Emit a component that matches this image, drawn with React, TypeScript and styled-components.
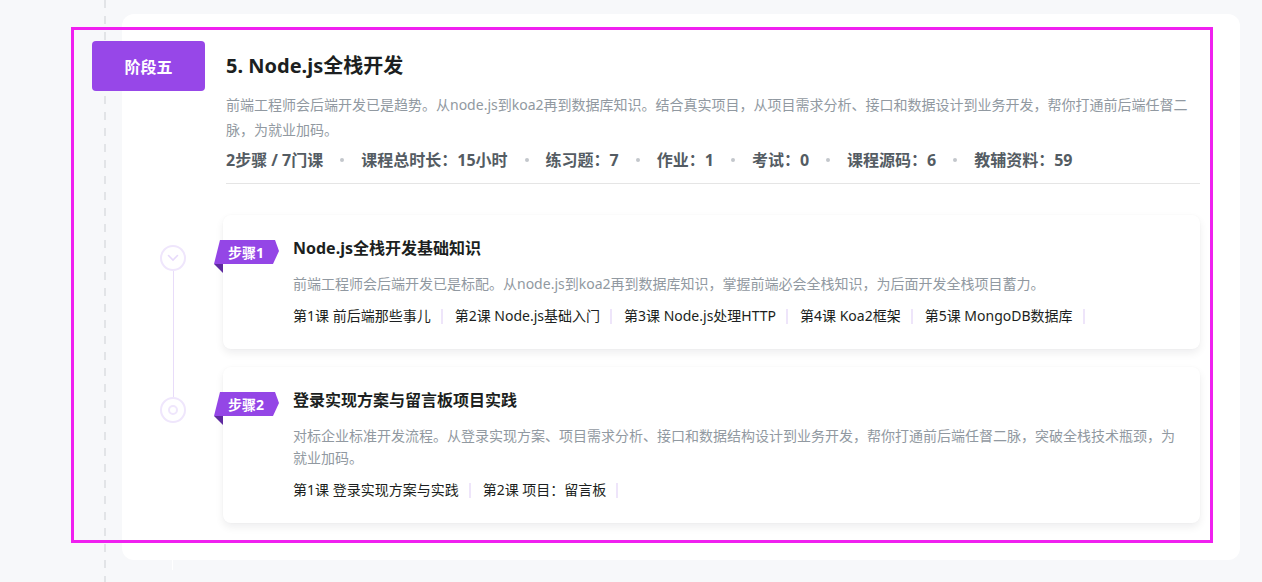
import React from "react"
import styled, { createGlobalStyle } from "styled-components"

const GlobalStyle = createGlobalStyle`
	html, body {
		margin: 0;
		padding: 0;
		background: #f7f8fa;
	}
	body {
		font-family: "Noto Sans", "Noto Sans CJK SC", sans-serif;
	}
`

interface Step {
	no: number
	icon: "chevron" | "dot"
	title: string
	desc: string
	lessons: string[]
}

const stats = ["2步骤 / 7门课", "课程总时长：15小时", "练习题：7", "作业：1", "考试：0", "课程源码：6", "教辅资料：59"]

const steps: Step[] = [
	{
		no: 1,
		icon: "chevron",
		title: "Node.js全栈开发基础知识",
		desc: "前端工程师会后端开发已是标配。从node.js到koa2再到数据库知识，掌握前端必会全栈知识，为后面开发全栈项目蓄力。",
		lessons: ["第1课 前后端那些事儿", "第2课 Node.js基础入门", "第3课 Node.js处理HTTP", "第4课 Koa2框架", "第5课 MongoDB数据库"],
	},
	{
		no: 2,
		icon: "dot",
		title: "登录实现方案与留言板项目实践",
		desc: "对标企业标准开发流程。从登录实现方案、项目需求分析、接口和数据结构设计到业务开发，帮你打通前后端任督二脉，突破全栈技术瓶颈，为就业加码。",
		lessons: ["第1课 登录实现方案与实践", "第2课 项目：留言板"],
	},
]

const StepMarker = ({ icon }: { icon: Step["icon"] }) => (
	<svg width="26" height="26" viewBox="0 0 26 26">
		<circle cx="13" cy="13" r="12" fill="#fff" stroke="#efe6fc" strokeWidth="2" />
		{icon === "chevron" ? (
			<path d="M8.5 10.5 L13 15 L17.5 10.5" fill="none" stroke="#e7dafb" strokeWidth="1.6" strokeLinecap="round" />
		) : (
			<circle cx="13" cy="13" r="4" fill="none" stroke="#efe6fc" strokeWidth="2" />
		)}
	</svg>
)

const Ribbon = ({ no }: { no: number }) => (
	<RibbonWrap>
		<svg width="66" height="33" viewBox="0 0 66 33">
			<polygon points="1,24 10,24 10,33" fill="#5e2a9f" />
			<polygon points="7,0 62,0 66,11 60,24 1,24" fill="#9446e6" />
		</svg>
		<RibbonLabel>步骤{no}</RibbonLabel>
	</RibbonWrap>
)

export default function App() {
	return (
		<>
			<GlobalStyle />
			<Page>
				<Rail>
					<Dashes />
				</Rail>
				<Card>
					<Header>
						<StageBadge>阶段五</StageBadge>
						<Intro>
							<Title>5. Node.js全栈开发</Title>
							<Desc>
								前端工程师会后端开发已是趋势。从node.js到koa2再到数据库知识。结合真实项目，从项目需求分析、接口和数据设计到业务开发，帮你打通前后端任督二脉，为就业加码。
							</Desc>
							<Stats>
								{stats.map((s, i) => (
									<React.Fragment key={s}>
										{i > 0 && <Dot />}
										<span>{s}</span>
									</React.Fragment>
								))}
							</Stats>
							<Divider />
						</Intro>
					</Header>
					<StepList>
						{steps.map((step, i) => (
							<StepRow key={step.no}>
								<Timeline>
									<LineSegment visible={i > 0} fixed />
									<StepMarker icon={step.icon} />
									<LineSegment visible={i < steps.length - 1} />
								</Timeline>
								<StepCard>
									<Ribbon no={step.no} />
									<StepTitle>{step.title}</StepTitle>
									<StepDesc>{step.desc}</StepDesc>
									<Lessons>
										{step.lessons.map((l) => (
											<Lesson key={l}>{l}</Lesson>
										))}
									</Lessons>
								</StepCard>
							</StepRow>
						))}
					</StepList>
				</Card>
				<Highlight />
			</Page>
		</>
	)
}

const Page = styled.div`
	position: relative;
	display: flex;
	width: 1262px;
	height: 582px;
	overflow: hidden;
	background: #f7f8fa;
`

const Rail = styled.div`
	flex: 0 0 122px;
	display: flex;
	padding-left: 104px;
	box-sizing: border-box;
`

const Dashes = styled.div`
	width: 2px;
	background: repeating-linear-gradient(to bottom, #e2e4e7 0 8px, transparent 8px 16px);
`

const Card = styled.div`
	position: relative;
	align-self: flex-start;
	margin-top: 14px;
	width: 1118px;
	height: 546px;
	box-sizing: border-box;
	padding: 27px 40px 0 0;
	background: #fff;
	border-radius: 12px;
	display: flex;
	flex-direction: column;
	&::after {
		content: "";
		position: absolute;
		left: 50px;
		top: 100%;
		width: 1px;
		height: 10px;
		background: #fff;
	}
`

const Header = styled.div`
	display: flex;
	align-items: flex-start;
`

const StageBadge = styled.div`
	flex-shrink: 0;
	margin-left: -30px;
	width: 113px;
	height: 50px;
	border-radius: 4px;
	background: #9747e8;
	color: #fff;
	font-size: 16px;
	font-weight: 700;
	display: flex;
	align-items: center;
	justify-content: center;
`

const Intro = styled.div`
	flex: 1;
	margin-left: 21px;
	padding-top: 11px;
`

const Title = styled.div`
	font-size: 20px;
	line-height: 28px;
	font-weight: 700;
	color: #1c1f21;
`

const Desc = styled.div`
	margin-top: 12px;
	font-size: 14px;
	line-height: 25px;
	color: #9199a1;
`

const Stats = styled.div`
	margin-top: 6px;
	display: flex;
	align-items: center;
	font-size: 16px;
	line-height: 24px;
	font-weight: 700;
	color: #545c63;
`

const Dot = styled.i`
	width: 4px;
	height: 4px;
	border-radius: 50%;
	background: #c3c7cc;
	margin: 0 17px;
`

const Divider = styled.div`
	margin-top: 11px;
	height: 1px;
	background: #e5e5e5;
`

const StepList = styled.div`
	margin-top: 31px;
	padding-left: 38px;
	display: flex;
	flex-direction: column;
	gap: 18px;
`

const StepRow = styled.div`
	display: flex;
`

const Timeline = styled.div`
	flex: 0 0 63px;
	display: flex;
	flex-direction: column;
	align-items: flex-start;
`

interface SegmentProps {
	visible: boolean
	fixed?: boolean
}

const LineSegment = styled.div.withConfig({ shouldForwardProp: (p) => p !== "visible" && p !== "fixed" })<SegmentProps>`
	width: 1px;
	margin-left: 12.5px;
	background: ${(p) => (p.visible ? "#e8dcf9" : "transparent")};
	${(p) => (p.fixed ? "height: 30px;" : "flex: 1; margin-bottom: -18px;")}
`

const StepCard = styled.div`
	position: relative;
	flex: 1;
	padding: 21px 20px 22px 70px;
	background: #fff;
	border-radius: 8px;
	box-shadow: 0 4px 8px 0 rgba(7, 17, 27, 0.07), 0 0 2px rgba(7, 17, 27, 0.03);
`

const RibbonWrap = styled.div`
	position: absolute;
	left: -10px;
	top: 25px;
	width: 66px;
	height: 33px;
	svg {
		display: block;
	}
`

const RibbonLabel = styled.span`
	position: absolute;
	left: 0;
	top: 0;
	width: 66px;
	height: 24px;
	display: flex;
	align-items: center;
	justify-content: center;
	color: #fff;
	font-size: 14px;
	font-weight: 700;
`

const StepTitle = styled.div`
	font-size: 16px;
	line-height: 24px;
	font-weight: 700;
	color: #1c1f21;
`

const StepDesc = styled.div`
	margin-top: 13px;
	font-size: 14px;
	line-height: 22px;
	color: #9199a1;
`

const Lessons = styled.div`
	margin-top: 10px;
	display: flex;
	flex-wrap: wrap;
	font-size: 14px;
	line-height: 22px;
	color: #1c1f21;
`

const Lesson = styled.span`
	display: flex;
	align-items: center;
	&::after {
		content: "";
		width: 2px;
		height: 15px;
		margin: 0 12px 0 10px;
		background: #eee5fa;
	}
`

const Highlight = styled.div`
	position: absolute;
	left: 71px;
	top: 27px;
	width: 1142px;
	height: 516px;
	box-sizing: border-box;
	border: 3px solid #f020f0;
	pointer-events: none;
`
